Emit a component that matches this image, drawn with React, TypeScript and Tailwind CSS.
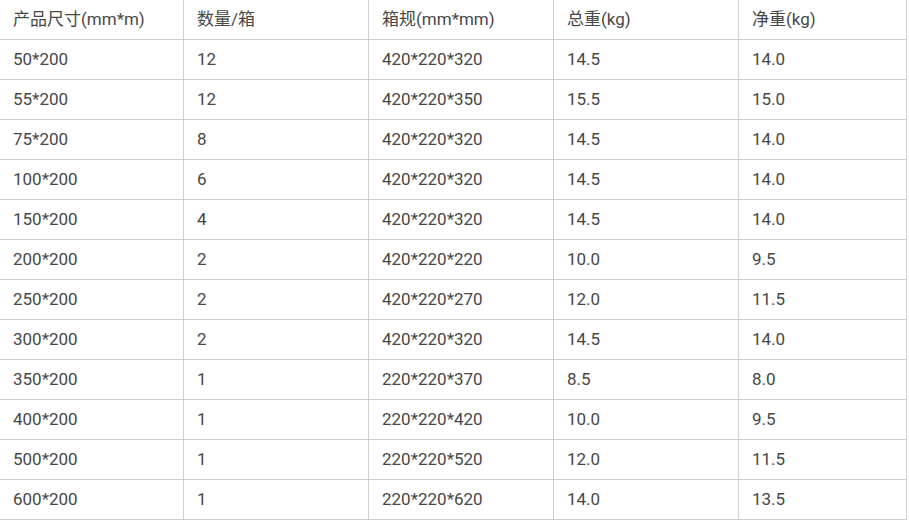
const header = ["产品尺寸(mm*m)", "数量/箱", "箱规(mm*mm)", "总重(kg)", "净重(kg)"];

const rows = [
  ["50*200", "12", "420*220*320", "14.5", "14.0"],
  ["55*200", "12", "420*220*350", "15.5", "15.0"],
  ["75*200", "8", "420*220*320", "14.5", "14.0"],
  ["100*200", "6", "420*220*320", "14.5", "14.0"],
  ["150*200", "4", "420*220*320", "14.5", "14.0"],
  ["200*200", "2", "420*220*220", "10.0", "9.5"],
  ["250*200", "2", "420*220*270", "12.0", "11.5"],
  ["300*200", "2", "420*220*320", "14.5", "14.0"],
  ["350*200", "1", "220*220*370", "8.5", "8.0"],
  ["400*200", "1", "220*220*420", "10.0", "9.5"],
  ["500*200", "1", "220*220*520", "12.0", "11.5"],
  ["600*200", "1", "220*220*620", "14.0", "13.5"],
];

const Cell = ({ text }: { text: string }) => (
  <div className="h-10 flex items-center pl-[13px] border-r border-b border-[#cfcfcf] whitespace-nowrap">
    {text}
  </div>
);

const App = () => {
  return (
    <div
      className="w-[909px] h-[520px] bg-white text-[#474747] text-[17px] overflow-hidden"
      style={{ fontFamily: 'Roboto, "Noto Sans CJK SC", sans-serif' }}
    >
      <div className="grid grid-cols-[184px_185px_185px_185px_168px]">
        {header.map((h) => (
          <Cell key={h} text={h} />
        ))}
        {rows.map((r, i) => r.map((c, j) => <Cell key={`${i}-${j}`} text={c} />))}
      </div>
    </div>
  );
};

export default App;
